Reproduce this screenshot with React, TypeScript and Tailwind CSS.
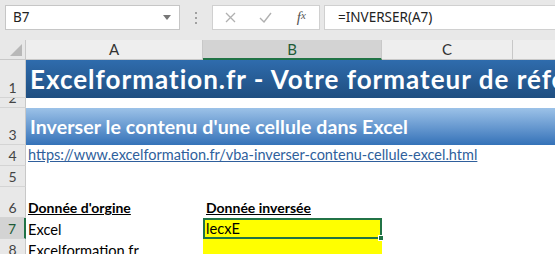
import React from "react";

const cal = { fontFamily: "Lato, 'Noto Sans', sans-serif" };
const ui = { fontFamily: "'Noto Sans', 'Open Sans', sans-serif" };

function RowHead({ n, h, sel }: { n: string; h: string; sel?: boolean }) {
  return (
    <div
      className={`${h} flex items-end justify-center overflow-hidden border-b border-[#d4d4d4] ${
        sel ? "bg-[#d3d3d3] border-r-2 border-r-[#217346] text-[#1e5b37]" : "bg-[#e8e8e8] border-r border-r-[#c8c8c8] text-[#444]"
      } text-[14px] leading-[18px]`}
      style={cal}
    >
      {n}
    </div>
  );
}

export default function App() {
  return (
    <div className="w-[555px] h-[254px] overflow-hidden bg-white relative" style={cal}>
      {/* formula bar */}
      <div className="h-[40px] bg-[#e8e8e8] flex items-start pt-[5px] pl-[5px]">
        <div className="w-[175px] h-[25px] bg-white border border-[#c6c6c6] flex items-center justify-between pl-[7px] pr-[8px] text-[13.5px] text-[#222]" style={ui}>
          <span>B7</span>
          <svg width="8" height="5" viewBox="0 0 8 5"><path d="M0 0h8L4 5z" fill="#777" /></svg>
        </div>
        <div className="w-[32px] h-[25px] flex flex-col items-center justify-center gap-[3px]">
          <span className="w-[2px] h-[2px] bg-[#a0a0a0]" />
          <span className="w-[2px] h-[2px] bg-[#a0a0a0]" />
          <span className="w-[2px] h-[2px] bg-[#a0a0a0]" />
        </div>
        <div className="w-[108px] h-[25px] bg-white border border-[#d0d0d0] flex items-center">
          <div className="w-[36px] flex justify-center">
            <svg width="11" height="11" viewBox="0 0 11 11"><path d="M1 1L10 10M10 1L1 10" stroke="#b0b0b0" strokeWidth="1.3" /></svg>
          </div>
          <div className="w-[36px] flex justify-center">
            <svg width="13" height="11" viewBox="0 0 13 11"><path d="M1 6L5 10L12 1" stroke="#b0b0b0" strokeWidth="1.4" fill="none" /></svg>
          </div>
          <div className="w-[36px] flex justify-center text-[#555] italic text-[15px] leading-none" style={{ fontFamily: "'Liberation Serif', serif" }}>
            f<span className="text-[11px]">x</span>
          </div>
        </div>
        <div className="ml-[4px] flex-1 h-[25px] bg-white border border-[#d0d0d0] border-r-0 flex items-center pl-[13px] text-[13.5px] text-[#222]" style={ui}>
          =INVERSER(A7)
        </div>
      </div>

      {/* grid */}
      <div className="grid grid-cols-[26px_177px_179px_131px_1fr]">
        {/* column headers */}
        <div className="h-[20px] bg-[#e8e8e8] border-r border-b border-[#c8c8c8] relative">
          <svg className="absolute right-[3px] bottom-[3px]" width="12" height="12" viewBox="0 0 12 12"><path d="M12 0V12H0z" fill="#b8b8b8" /></svg>
        </div>
        <div className="h-[20px] bg-[#eeeeee] border-r border-b border-[#c8c8c8] flex items-center justify-center text-[15px] text-[#333]">A</div>
        <div className="h-[20px] bg-[#d3d3d3] border-r border-[#c8c8c8] border-b-2 border-b-[#217346] flex items-center justify-center text-[15px] text-[#1e5b37]">B</div>
        <div className="h-[20px] bg-[#eeeeee] border-r border-b border-[#c8c8c8] flex items-center justify-center text-[15px] text-[#333]">C</div>
        <div className="h-[20px] bg-[#eeeeee] border-b border-[#c8c8c8]" />

        {/* row 1 */}
        <RowHead n="1" h="h-[38px]" />
        <div className="col-span-4 h-[38px] bg-gradient-to-b from-[#2f6cad] to-[#1f4e80] text-white font-bold text-[26px] leading-[38px] whitespace-nowrap overflow-hidden pl-[4px] tracking-[1px]">
          Excelformation.fr - Votre formateur de référence
        </div>

        {/* row 2 */}
        <RowHead n="2" h="h-[10px]" />
        <div className="col-span-4 h-[10px]" />

        {/* row 3 */}
        <RowHead n="3" h="h-[37px]" />
        <div className="col-span-4 h-[37px] bg-gradient-to-b from-[#9cc2e8] to-[#3472b8] text-white font-bold text-[19.5px] leading-[37px] whitespace-nowrap overflow-hidden pl-[4px] tracking-[0.1px]">
          Inverser le contenu d'une cellule dans Excel
        </div>

        {/* row 4 */}
        <RowHead n="4" h="h-[21px]" />
        <div className="col-span-4 h-[21px] text-[14.5px] leading-[20px] text-[#2f5f9c] underline whitespace-nowrap pl-[2px]">
          https://www.excelformation.fr/vba-inverser-contenu-cellule-excel.html
        </div>

        {/* row 5 */}
        <RowHead n="5" h="h-[21px]" />
        <div className="col-span-4 h-[21px]" />

        {/* row 6 */}
        <RowHead n="6" h="h-[31px]" />
        <div className="h-[31px] flex items-end pl-[2px] text-[14px] leading-[20px] font-bold underline text-black">Donnée d'orgine</div>
        <div className="h-[31px] flex items-end pl-[3px] text-[14px] leading-[20px] font-bold underline text-black">Donnée inversée</div>
        <div className="col-span-2 h-[31px]" />

        {/* row 7 */}
        <RowHead n="7" h="h-[21px]" sel />
        <div className="h-[21px] flex items-end pl-[2px] text-[14.67px] leading-[19px] text-black">Excel</div>
        <div className="h-[21px] bg-[#ffff00] border-2 border-[#217346] flex items-end pl-[1px] text-[14.67px] leading-[17px] text-black relative">
          lecxE
          <span className="absolute right-[-4px] bottom-[-4px] w-[6px] h-[6px] bg-[#217346] border border-white" />
        </div>
        <div className="col-span-2 h-[21px]" />

        {/* row 8 */}
        <RowHead n="8" h="h-[21px]" />
        <div className="h-[21px] flex items-end pl-[2px] text-[14.67px] leading-[19px] text-black">Excelformation.fr</div>
        <div className="h-[21px] bg-[#ffff00]" />
        <div className="col-span-2 h-[21px]" />
      </div>
    </div>
  );
}
